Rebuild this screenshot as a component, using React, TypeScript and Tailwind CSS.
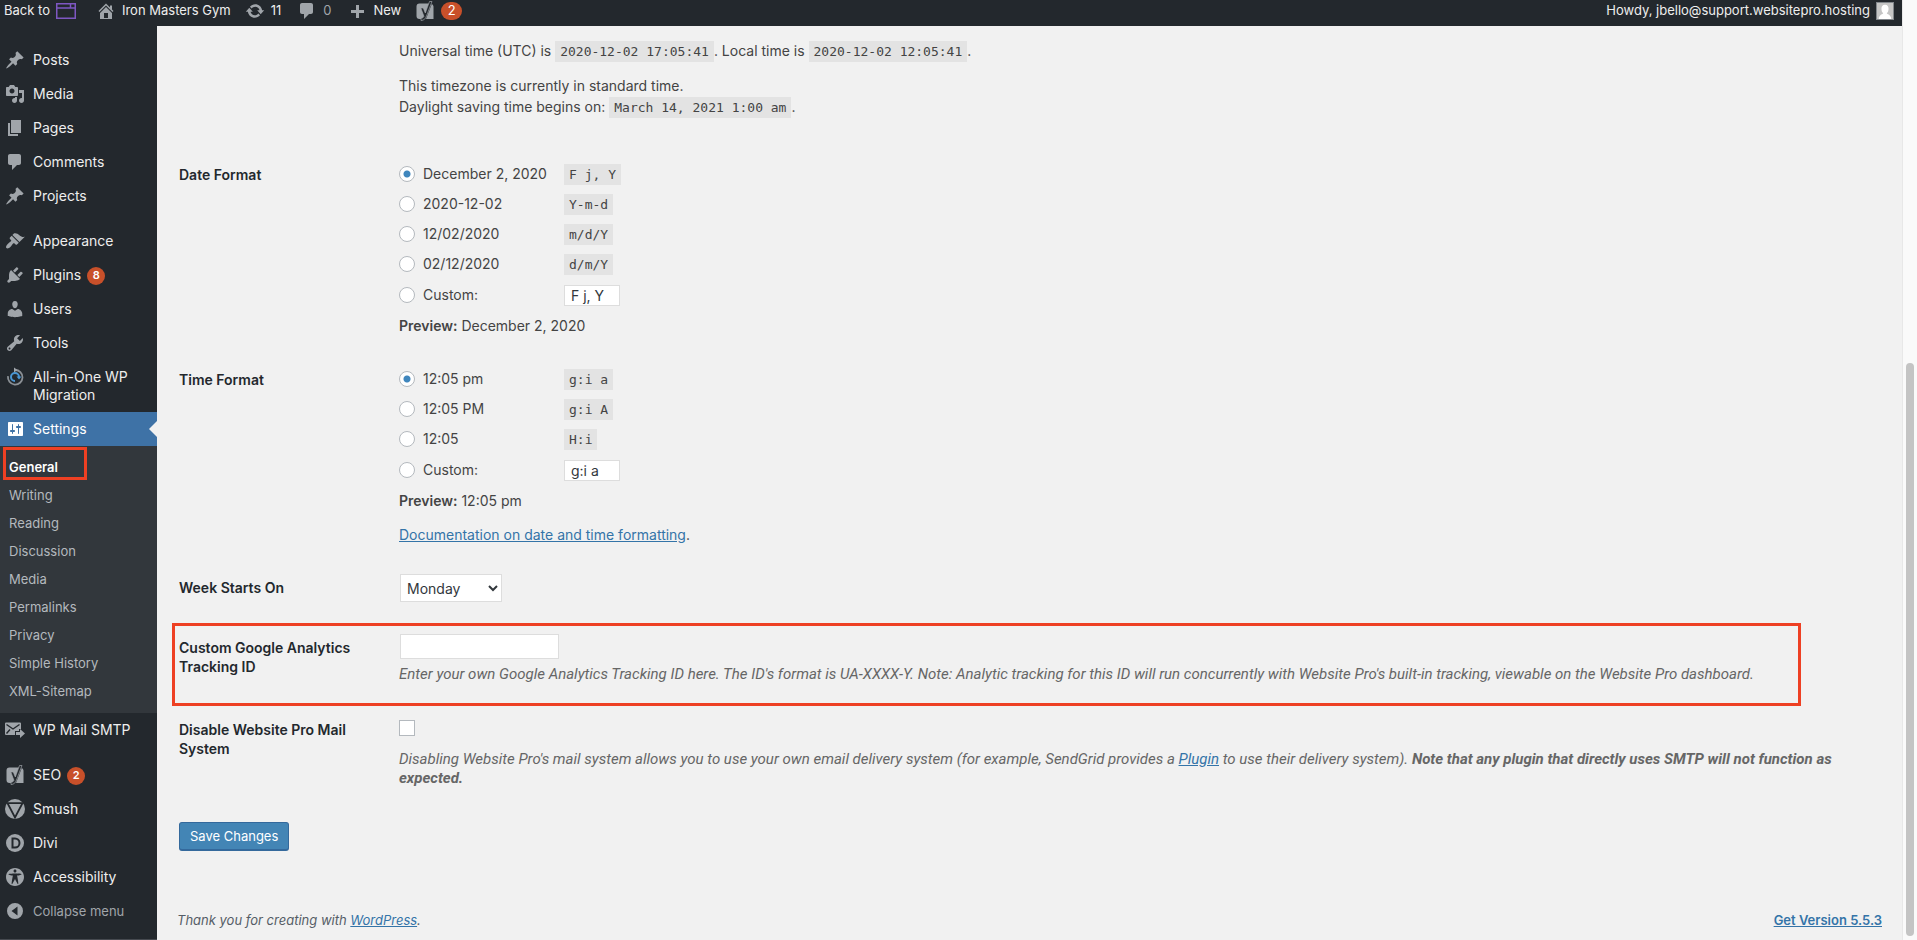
import { useState, type ReactNode } from 'react';

const icons = {
  post: 'M10.44 3.02l1.82-1.82 6.36 6.35-1.83 1.82c-1.05-.68-2.48-.57-3.41.36l-.75.75c-.92.93-1.04 2.35-.35 3.41l-1.83 1.82-2.41-2.41-2.8 2.79c-.42.42-3.38 2.71-3.8 2.29s1.86-3.39 2.28-3.81l2.79-2.79L4.1 9.36l1.83-1.82c1.05.69 2.48.57 3.4-.36l.75-.75c.93-.92 1.05-2.35.36-3.41z',
  media: 'M13 11V4c0-.55-.45-1-1-1h-1.67L9 1H5L3.67 3H2c-.55 0-1 .45-1 1v7c0 .55.45 1 1 1h10c.55 0 1-.45 1-1zM7 4.5c1.38 0 2.5 1.12 2.5 2.5S8.38 9.5 7 9.5 4.5 8.38 4.5 7 5.62 4.5 7 4.5zM14 6h5v10.5c0 1.38-1.12 2.5-2.5 2.5S14 17.88 14 16.5s1.12-2.5 2.5-2.5c.17 0 .34.02.5.05V9h-3V6zm-4 8.05V13h2v3.5c0 1.38-1.12 2.5-2.5 2.5S7 17.88 7 16.5 8.12 14 9.5 14c.17 0 .34.02.5.05z',
  page: 'M6 15V2h10v13H6zm-1 1h8v2H3V5h2v11z',
  comments: 'M5 2h9c1.1 0 2 .9 2 2v7c0 1.1-.9 2-2 2h-2l-5 5v-5H5c-1.1 0-2-.9-2-2V4c0-1.1.9-2 2-2z',
  appearance: 'M14.48 11.06L7.41 3.99l1.5-1.5c.5-.56 2.3-.47 3.51.32 1.21.8 1.43 1.28 2.91 2.1 1.18.64 2.45 1.26 4.45.85zm-.71.71L6.7 4.7 4.93 6.47c-.39.39-.39 1.02 0 1.41l1.06 1.06c.39.39.39 1.03 0 1.42-.6.6-1.43 1.11-2.21 1.69-.35.26-.7.53-1.01.84C1.43 14.23.4 16.08 1.4 17.07c.99 1 2.84-.03 4.18-1.36.31-.31.58-.66.85-1.02.57-.78 1.08-1.61 1.69-2.21.39-.39 1.02-.39 1.41 0l1.06 1.06c.39.39 1.02.39 1.41 0z',
  plugins: 'M13.11 4.36L9.87 7.6 8 5.73l3.24-3.24c.35-.34 1.05-.2 1.56.32.52.51.66 1.21.31 1.55zm-8 1.77l.91-1.12 9.01 9.01-1.19.84c-.71.71-2.63 1.16-3.82 1.16H6.14L4.9 17.26c-.59.59-1.54.59-2.12 0-.59-.58-.59-1.53 0-2.12l1.24-1.24v-3.88c0-1.13.4-3.19 1.09-3.89zm7.26 3.97l3.24-3.24c.34-.35 1.04-.21 1.55.31.52.51.66 1.21.31 1.55l-3.24 3.25z',
  users: 'M10 9.25c-2.27 0-2.73-3.44-2.73-3.44C7 4.02 7.82 2 9.97 2c2.16 0 2.98 2.02 2.71 3.81 0 0-.41 3.44-2.68 3.44zm0 2.57L12.72 10c2.39 0 4.52 2.33 4.52 4.53v2.49s-3.65 1.13-7.24 1.13c-3.65 0-7.24-1.13-7.24-1.13v-2.49c0-2.25 1.94-4.48 4.47-4.48z',
  tools: 'M16.68 9.77c-1.34 1.34-3.3 1.67-4.95.99l-5.41 6.52c-.99.99-2.59.99-3.58 0s-.99-2.59 0-3.57l6.52-5.42c-.68-1.65-.35-3.61.99-4.95 1.28-1.28 3.12-1.62 4.72-1.06l-2.89 2.89 2.82 2.82 2.86-2.87c.53 1.58.18 3.39-1.08 4.65zM3.81 16.21c.4.39 1.04.39 1.43 0 .4-.4.4-1.04 0-1.43-.39-.4-1.03-.4-1.43 0-.39.39-.39 1.03 0 1.43z',
  settings: 'M18 16V4c0-.55-.45-1-1-1H4c-.55 0-1 .45-1 1v12c0 .55.45 1 1 1h13c.55 0 1-.45 1-1zM8 11h1c.55 0 1 .45 1 1s-.45 1-1 1H8v1.5c0 .28-.22.5-.5.5s-.5-.22-.5-.5V13H6c-.55 0-1-.45-1-1s.45-1 1-1h1V5.5c0-.28.22-.5.5-.5s.5.22.5.5V11zm5-2h-1c-.55 0-1-.45-1-1s.45-1 1-1h1V5.5c0-.28.22-.5.5-.5s.5.22.5.5V7h1c.55 0 1 .45 1 1s-.45 1-1 1h-1v5.5c0 .28-.22.5-.5.5s-.5-.22-.5-.5V9z',
  home: 'M16 8.5l1.53 1.53-1.06 1.06L10 4.6l-6.47 6.49-1.06-1.06L10 2.5l4 4v-2h2v4zm-6-2.46l6 5.99V18H4v-5.97zM12 17v-5H8v5h4z',
  update: 'M10.2 3.28c3.53 0 6.43 2.61 6.92 6h2.08l-3.5 4-3.5-4h2.32c-.45-1.97-2.21-3.45-4.32-3.45-1.45 0-2.73.71-3.54 1.78L4.95 5.66C6.23 4.2 8.11 3.28 10.2 3.28zm-.4 13.44c-3.52 0-6.43-2.61-6.92-6H.8l3.5-4c1.17 1.33 2.33 2.67 3.5 4H5.48c.45 1.97 2.21 3.45 4.32 3.45 1.45 0 2.73-.71 3.54-1.78l1.71 1.95c-1.28 1.46-3.15 2.38-5.25 2.38z',
  plus: 'M17 9v3h-5v5H9v-5H4V9h5V4h3v5z',
  access: 'M19 10c0-4.97-4.03-9-9-9s-9 4.03-9 9 4.03 9 9 9 9-4.03 9-9zm-9-7.4c.83 0 1.5.67 1.5 1.5s-.67 1.51-1.5 1.51c-.82 0-1.5-.68-1.5-1.51s.68-1.5 1.5-1.5zM3.4 7.36c0-.65 6.6-.76 6.6-.76s6.6.11 6.6.76-4.47 1.4-4.47 1.4 1.69 8.14 1.06 8.38c-.62.24-3.19-5.19-3.19-5.19s-2.56 5.43-3.18 5.19c-.63-.24 1.06-8.38 1.06-8.38S3.4 8.01 3.4 7.36z',
  collapse: 'M10 2a8 8 0 1 0 0 16 8 8 0 0 0 0-16zM12.5 5.5v9L6.5 10z',
};

function Icon({ d }: { d: string }) {
  return (
    <svg viewBox="0 0 20 20" className="size-5 shrink-0 fill-current" fillRule="evenodd" aria-hidden="true">
      <path d={d} />
    </svg>
  );
}

function YoastIcon() {
  return (
    <svg viewBox="0 0 20 20" className="size-5 shrink-0" aria-hidden="true">
      <path d="M4.500 2.500h9.500L9 18H4.500a3 3 0 0 1-3-3V5.500a3 3 0 0 1 3-3zM16.800 3a3 3 0 0 1 1.700 2.500V18h-7.500z" fill="#a0a5aa" />
      <path d="M14.500 0.500h2.500l-5.500 14.500c-1 2.700-2.500 4.500-5.500 4.500v-2.200c1.500 0 2.400-.8 2.900-2L5.800 7h2.500l2 5z" fill="#23282d" stroke="#a0a5aa" strokeWidth="0.700" />
    </svg>
  );
}

function MigrationIcon() {
  return (
    <svg viewBox="0 0 20 20" className="size-5 shrink-0" fill="none" aria-hidden="true">
      <path d="M10 3a7.300 7.300 0 1 1-7 6.200" stroke="#8b9095" strokeWidth="1.800" />
      <path d="M9 .5v5L12.500 3z" fill="#a0a5aa" />
      <path d="M10 14a4 4 0 1 1 4-4" stroke="#4a96d2" strokeWidth="2" />
      <path d="M11.500 9.500h5L14 12.500z" fill="#4a96d2" />
    </svg>
  );
}

function MailIcon() {
  return (
    <svg viewBox="0 0 20 20" className="size-5 shrink-0" aria-hidden="true">
      <path d="M1 2.500h14a1 1 0 0 1 1 1V9h-2v2h-4v4H1a1 1 0 0 1-1-1V3.500a1 1 0 0 1 1-1z" fill="#a0a5aa" />
      <path d="M1.500 4.500L8 9l6.500-4.500M1.500 13.500l3.500-4" fill="none" stroke="#23282d" strokeWidth="1.400" />
      <path d="M11 12h4V9l5 4.500-5 4.500v-3h-4z" fill="#a0a5aa" />
    </svg>
  );
}

function SmushIcon() {
  return (
    <svg viewBox="0 0 20 20" className="size-5 shrink-0" aria-hidden="true">
      <circle cx="10" cy="10" r="10" fill="#a0a5aa" />
      <path d="M2.500 4.200h15L10 18.500z" fill="none" stroke="#23282d" strokeWidth="1.800" />
      <path d="M6.500 6.500h7L10 13.500z" fill="#a0a5aa" />
    </svg>
  );
}

function DiviIcon() {
  return (
    <svg viewBox="0 0 20 20" className="size-5 shrink-0" fill="none" aria-hidden="true">
      <circle cx="10" cy="10" r="9" fill="#a0a5aa" />
      <path d="M7.500 5.500H10a4.500 4.500 0 0 1 0 9H7.500z" stroke="#23282d" strokeWidth="2" />
    </svg>
  );
}

function Badge({ children }: { children: ReactNode }) {
  return (
    <span className="flex h-[18px] min-w-[18px] items-center justify-center rounded-full bg-[#c8502a] text-[11px] font-semibold text-white">
      {children}
    </span>
  );
}

function MenuItem({ icon, label, badge }: { icon: ReactNode; label: string; badge?: string }) {
  return (
    <a href="#" className="flex items-start gap-2 py-[7px] pr-2 pl-[5px] text-[#a0a5aa]">
      {icon}
      <span className="py-px text-sm leading-[18px] text-[#eee]">{label}</span>
      {badge && <span className="-ml-0.5 pt-0.5"><Badge>{badge}</Badge></span>}
    </a>
  );
}

const submenu = ['Writing', 'Reading', 'Discussion', 'Media', 'Permalinks', 'Privacy', 'Simple History', 'XML-Sitemap'];

function Sidebar() {
  return (
    <nav className="w-[157px] shrink-0 border-b border-[#464a50] bg-[#23282d] pt-[17px]">
      <MenuItem icon={<Icon d={icons.post} />} label="Posts" />
      <MenuItem icon={<Icon d={icons.media} />} label="Media" />
      <MenuItem icon={<Icon d={icons.page} />} label="Pages" />
      <MenuItem icon={<Icon d={icons.comments} />} label="Comments" />
      <MenuItem icon={<Icon d={icons.post} />} label="Projects" />
      <div className="h-[11px]" />
      <MenuItem icon={<Icon d={icons.appearance} />} label="Appearance" />
      <MenuItem icon={<Icon d={icons.plugins} />} label="Plugins" badge="8" />
      <MenuItem icon={<Icon d={icons.users} />} label="Users" />
      <MenuItem icon={<Icon d={icons.tools} />} label="Tools" />
      <MenuItem icon={<MigrationIcon />} label="All-in-One WP Migration" />
      <a href="#" className="relative flex h-[34px] items-center gap-2 bg-[#3e72a6] pl-[5px] text-white">
        <Icon d={icons.settings} />
        <span className="text-sm">Settings</span>
        <span className="absolute right-0 border-y-8 border-r-8 border-y-transparent border-r-[#f1f1f1]" />
      </a>
      <ul className="bg-[#32373c] pt-[7px] pb-2 text-[13px] leading-7 text-[#b4b9be]">
        <li className="relative">
          <a href="#" className="block pl-[9px] font-semibold text-white">General</a>
          <span className="pointer-events-none absolute -top-1.5 left-[3px] h-[33px] w-[84px] border-3 border-[#ee4023]" />
        </li>
        {submenu.map((label) => (
          <li key={label}>
            <a href="#" className="block pl-[9px]">{label}</a>
          </li>
        ))}
      </ul>
      <MenuItem icon={<MailIcon />} label="WP Mail SMTP" />
      <div className="h-[11px]" />
      <MenuItem icon={<YoastIcon />} label="SEO" badge="2" />
      <MenuItem icon={<SmushIcon />} label="Smush" />
      <MenuItem icon={<DiviIcon />} label="Divi" />
      <MenuItem icon={<Icon d={icons.access} />} label="Accessibility" />
      <button className="flex h-[34px] items-center gap-2 pl-[5px] text-[13px] text-[#a0a5aa]">
        <Icon d={icons.collapse} />
        Collapse menu
      </button>
    </nav>
  );
}

function AdminBar() {
  return (
    <header className="flex h-[26px] items-center bg-[#23282d] pr-2 pb-[5px] pl-1 text-[13px] text-[#eee]">
      <a href="#" className="flex items-center gap-1.5">
        Back to
        <svg viewBox="0 0 20 16" className="h-4 w-5" fill="none" stroke="#7e57c2" strokeWidth="1.500" aria-hidden="true">
          <path d="M.75.75h18.500v14.500H.75zM.75 5h18.500M14.500 1v3.500" />
        </svg>
      </a>
      <a href="#" className="ml-5 flex items-center gap-1.5"><span className="text-[#a0a5aa]"><Icon d={icons.home} /></span>Iron Masters Gym</a>
      <a href="#" className="ml-3.5 flex items-center gap-1.5"><span className="text-[#a0a5aa]"><Icon d={icons.update} /></span>11</a>
      <a href="#" className="ml-4 flex items-center gap-1.5 text-[#a0a5aa]"><Icon d={icons.comments} />0</a>
      <a href="#" className="ml-4 flex items-center gap-1.5"><span className="text-[#a0a5aa]"><Icon d={icons.plus} /></span>New</a>
      <a href="#" className="ml-3.5 flex items-center gap-1.5">
        <YoastIcon />
        <span className="flex h-[18px] w-[21px] items-center justify-center rounded-full bg-[#c8502a] text-white">2</span>
      </a>
      <a href="#" className="ml-auto flex items-center gap-1.5">
        Howdy, jbello@support.websitepro.hosting
        <svg viewBox="0 0 18 18" className="size-[18px] border border-[#82878c] bg-[#c5c5c5] fill-white" aria-hidden="true">
          <path d="M9 2c3 0 4 2 4 4.500S12 11 11 11.500c0 1 5 1.500 5 6.500H2c0-5 5-5.500 5-6.500C6 11 5 9 5 6.500S6 2 9 2z" />
        </svg>
      </a>
    </header>
  );
}

function Code({ children }: { children: ReactNode }) {
  return <code className="bg-[#e3e3e3] px-[5px] py-[3px] font-['DejaVu_Sans_Mono',monospace] text-[13px] leading-[15px]">{children}</code>;
}

function Row({ label, htmlFor, className = '', children }: { label: string; htmlFor?: string; className?: string; children: ReactNode }) {
  const labelClass = 'block w-[180px] text-sm leading-[19px] font-semibold text-[#23282d]';
  return (
    <div className={`flex pl-[22px] ${className}`}>
      <div className="w-[220px] shrink-0">
        {label && (htmlFor ? <label htmlFor={htmlFor} className={labelClass}>{label}</label> : <span className={labelClass}>{label}</span>)}
      </div>
      <div className="min-w-0 flex-1">{children}</div>
    </div>
  );
}

function FormatOptions({ name, options, custom, preview }: { name: string; options: [string, string][]; custom: string; preview: string }) {
  const [selected, setSelected] = useState(0);
  const radio = (i: number) => (
    <input
      type="radio"
      name={name}
      checked={selected === i}
      onChange={() => setSelected(i)}
      className="size-4 appearance-none rounded-full border border-[#b4b9be] bg-white checked:bg-[radial-gradient(circle,#3f86bd_3px,white_4px)]"
    />
  );
  return (
    <fieldset>
      {options.map(([label, format], i) => (
        <div key={format} className="flex h-[30px] items-center">
          <label className="flex w-[165px] items-center gap-2">{radio(i)}{label}</label>
          <Code>{format}</Code>
        </div>
      ))}
      <div className="mt-px flex h-[30px] items-center">
        <label className="flex w-[165px] items-center gap-2">{radio(options.length)}Custom:</label>
        <input aria-label="Custom format" defaultValue={custom} className="h-[21px] w-14 border border-[#ddd] bg-white px-1.5 text-[#32373c]" />
      </div>
      <p className="mt-px leading-[30px]"><strong className="font-semibold">Preview:</strong> {preview}</p>
    </fieldset>
  );
}

function Description({ className, children }: { className: string; children: ReactNode }) {
  return <p className={`font-['Roboto',sans-serif] text-[15px] leading-[19px] text-[#666] italic ${className}`}>{children}</p>;
}

export default function App() {
  return (
    <div className="flex min-h-screen bg-[#f1f1f1] font-['Inter',sans-serif] text-sm text-[#444]">
      <div className="flex min-w-0 flex-1 flex-col">
        <AdminBar />
        <div className="flex flex-1">
          <Sidebar />
          <main className="flex min-w-0 flex-1 flex-col">
            <Row label="" className="pt-3.5 leading-[21px]">
              <p>Universal time (UTC) is <Code>2020-12-02 17:05:41</Code>. Local time is <Code>2020-12-02 12:05:41</Code>.</p>
              <p className="mt-3.5">
                This timezone is currently in standard time.
                <br />
                Daylight saving time begins on: <Code>March 14, 2021 1:00 am</Code>.
              </p>
            </Row>
            <Row label="Date Format" className="mt-[42px] [&>div:first-child]:pt-1.5">
              <FormatOptions
                name="date"
                options={[['December 2, 2020', 'F j, Y'], ['2020-12-02', 'Y-m-d'], ['12/02/2020', 'm/d/Y'], ['02/12/2020', 'd/m/Y']]}
                custom="F j, Y"
                preview="December 2, 2020"
              />
            </Row>
            <Row label="Time Format" className="mt-[23px] [&>div:first-child]:pt-1.5">
              <FormatOptions
                name="time"
                options={[['12:05 pm', 'g:i a'], ['12:05 PM', 'g:i A'], ['12:05', 'H:i']]}
                custom="g:i a"
                preview="12:05 pm"
              />
              <p className="mt-2 leading-[21px]"><a href="#" className="text-[#3474a8] underline">Documentation on date and time formatting</a>.</p>
            </Row>
            <Row label="Week Starts On" htmlFor="week" className="mt-[29px] [&>div:first-child]:pt-1">
              <select id="week" className="ml-px block h-7 w-[102px] border border-[#ddd] bg-white pl-0.5 text-[#32373c]">
                <option>Monday</option>
              </select>
            </Row>
            <div className="mt-[21px] mr-[101px] ml-[15px] h-[83px] border-3 border-[#ee4023]">
              <div className="-ml-[18px] pt-2">
                <Row label="Custom Google Analytics Tracking ID" htmlFor="tracking" className="[&>div:first-child]:pt-1">
                  <input id="tracking" className="ml-px block h-[25px] w-[159px] border border-[#ddd] bg-white px-1.5" />
                  <Description className="mt-1.5">
                    Enter your own Google Analytics Tracking ID here. The ID's format is UA-XXXX-Y. Note: Analytic tracking for this ID will run concurrently with Website Pro's built-in tracking, viewable on the Website Pro dashboard.
                  </Description>
                </Row>
              </div>
            </div>
            <Row label="Disable Website Pro Mail System" htmlFor="disable-mail" className="mt-3.5 pr-10">
              <input id="disable-mail" type="checkbox" className="block size-4 appearance-none border border-[#b4b9be] bg-white checked:bg-[#3f86bd]" />
              <Description className="mt-3.5">
                Disabling Website Pro's mail system allows you to use your own email delivery system (for example, SendGrid provides a <a href="#" className="text-[#3474a8] underline">Plugin</a> to use their delivery system). <strong className="font-bold">Note that any plugin that directly uses SMTP will not function as expected.</strong>
              </Description>
            </Row>
            <button className="mt-[34px] ml-[22px] h-[29px] self-start rounded-[3px] border border-b-2 border-[#34699c] bg-[#4385b5] px-2.5 text-[13px] text-white">
              Save Changes
            </button>
            <footer className="mt-auto flex justify-between pr-5 pb-2.5 pl-5 text-[13px] leading-[19px] text-[#555d66]">
              <p className="italic">Thank you for creating with <a href="#" className="text-[#3474a8] underline">WordPress</a>.</p>
              <a href="#" className="font-semibold text-[#3474a8] underline">Get Version 5.5.3</a>
            </footer>
          </main>
        </div>
      </div>
      <div className="flex w-[15px] shrink-0 flex-col items-center justify-end border-l border-[#e8e8e8] bg-[#fafafa] pb-1">
        <div className="h-[61vh] w-2 rounded-full bg-[#c4c4c4]" />
      </div>
    </div>
  );
}
